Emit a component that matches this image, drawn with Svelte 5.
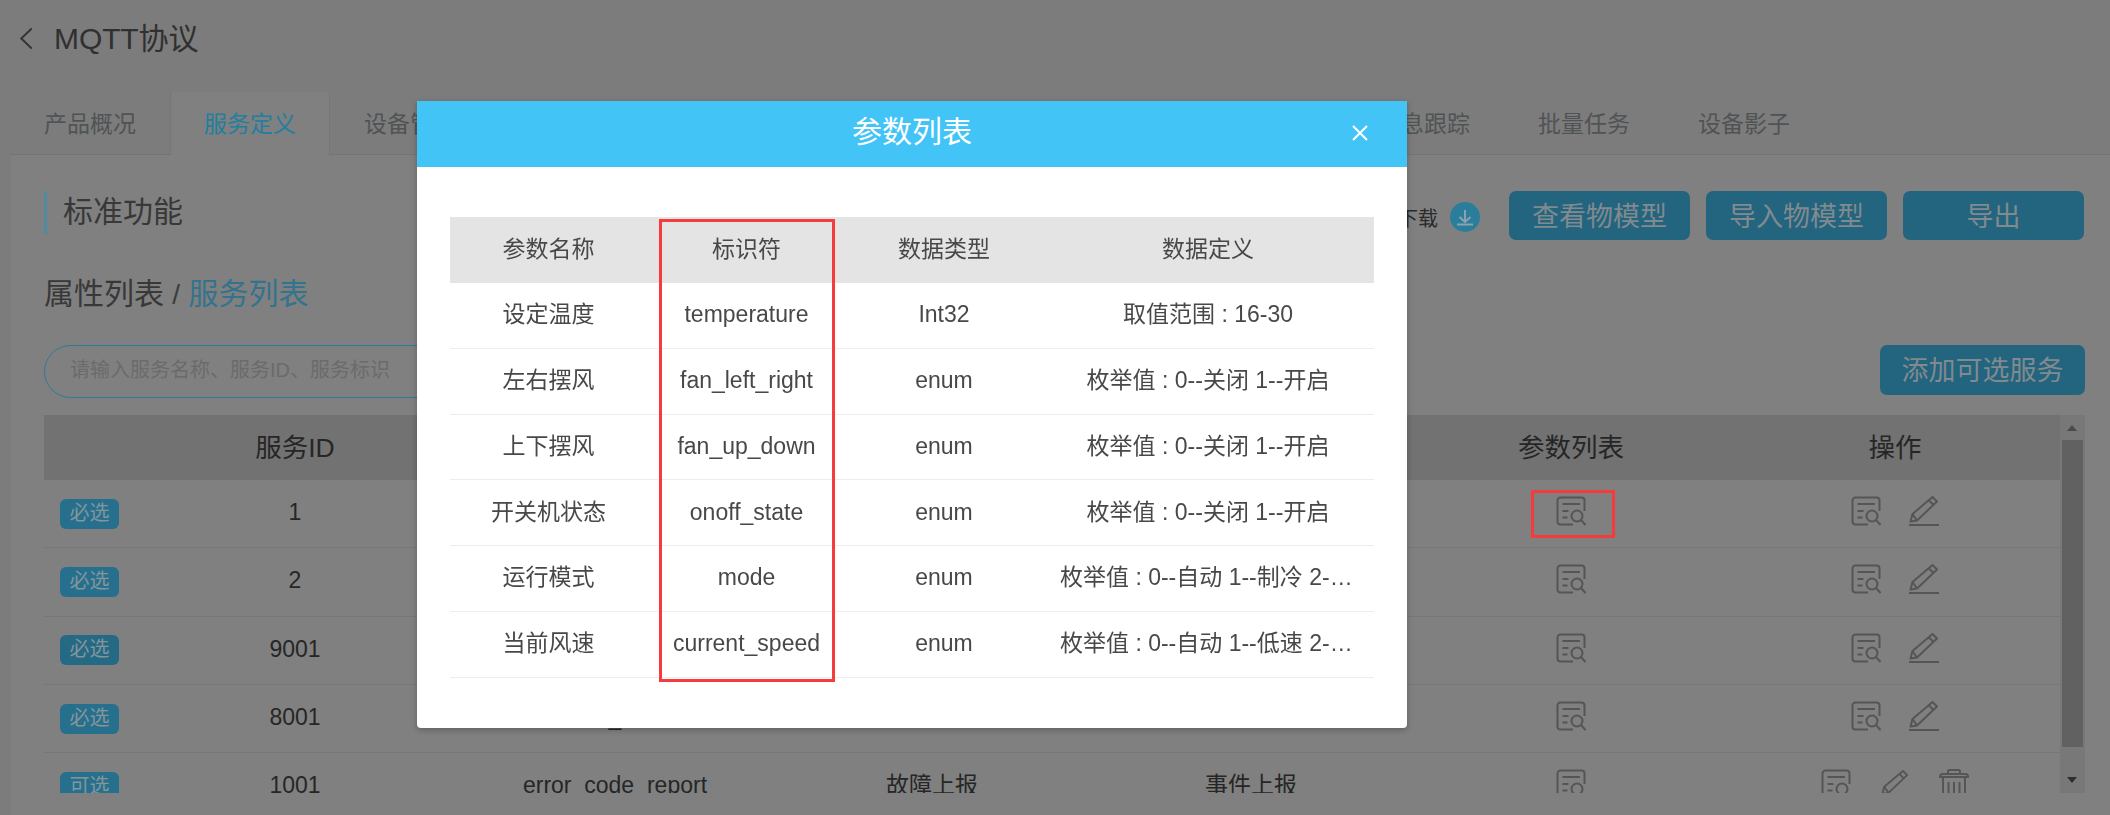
<script>
  const tabs = ['产品概况', '服务定义', '设备管理', '在线调试', '设备日志', '数据转发', '规则引擎', '告警通知', '消息跟踪', '批量任务', '设备影子'];
  const params = [
    ['设定温度', 'temperature', 'Int32', '取值范围 : 16-30'],
    ['左右摆风', 'fan_left_right', 'enum', '枚举值 : 0--关闭 1--开启'],
    ['上下摆风', 'fan_up_down', 'enum', '枚举值 : 0--关闭 1--开启'],
    ['开关机状态', 'onoff_state', 'enum', '枚举值 : 0--关闭 1--开启'],
    ['运行模式', 'mode', 'enum', '枚举值 : 0--自动 1--制冷 2--除湿 3--送风 4--制热'],
    ['当前风速', 'current_speed', 'enum', '枚举值 : 0--自动 1--低速 2--中速 3--高速']
  ];
  const services = [
    { tag: '必选', id: '1', name: 'set_status', kind: '属性设置', type: '属性上报' },
    { tag: '必选', id: '2', name: 'get_status', kind: '属性获取', type: '属性上报' },
    { tag: '必选', id: '9001', name: 'ota_update', kind: '固件升级', type: '服务调用' },
    { tag: '必选', id: '8001', name: 'dev_info', kind: '信息上报', type: '属性上报' },
    { tag: '可选', id: '1001', name: 'error_code_report', kind: '故障上报', type: '事件上报' }
  ];
</script>

{#snippet docIcon()}
  <svg class="icon" viewBox="0 0 30 30" fill="none" stroke="#555" stroke-width="2">
    <path d="M28.5 15V4.5a3 3 0 0 0-3-3H4.5a3 3 0 0 0-3 3v21a3 3 0 0 0 3 3H17" />
    <path d="M6.5 8H24M6.5 15h6M6.5 21.5h5" />
    <circle cx="21" cy="20" r="5.5" />
    <path d="M25 24l4.5 5" />
  </svg>
{/snippet}

{#snippet penIcon(line)}
  <svg class="icon" class:narrow={!line} viewBox="0 0 30 30" fill="none" stroke="#555" stroke-width="2" stroke-linejoin="round">
    <path d="M23.5 1L28 5.5 8 24.5l-6.5 1 2-7.5zM20 4.5l4.5 4.5M3.5 18L8 24.5" />
    {#if line}<path d="M0 29h30" />{/if}
  </svg>
{/snippet}

{#snippet trashIcon()}
  <svg class="icon" viewBox="0 0 30 30" fill="none" stroke="#555" stroke-width="2">
    <path d="M9 4V2.5a1.5 1.5 0 0 1 1.5-1.5h9A1.5 1.5 0 0 1 21 2.5V4" />
    <path d="M1 8V7.5A2.5 2.5 0 0 1 3.500 5h23A2.500 2.500 0 0 1 29 7.500V8z" />
    <path d="M4 8v19a2 2 0 0 0 2 2h18a2 2 0 0 0 2-2V8M9.500 13v12M15 13v12M20.500 13v12" />
  </svg>
{/snippet}

<div class="page">
  <header class="top">
    <svg class="back" viewBox="0 0 14 24" fill="none" stroke="#333" stroke-width="2"><path d="M13 1.500L2 12l11 10.500" /></svg>
    <h1>MQTT协议</h1>
  </header>

  <nav class="tabs">
    {#each tabs as tab, i}
      <div class="tab" class:active={i === 1} class:wide={i === 7}>{tab}</div>
    {/each}
  </nav>

  <main class="panel">
    <div class="bar-row">
      <h2 class="section">标准功能</h2>
      <div class="actions">
        <span class="dl">物模型下载</span>
        <span class="dl-icon">
          <svg viewBox="0 0 30 30" fill="none" stroke="#8aa3ad" stroke-width="2"><path d="M15 8v12M9.500 15l5.500 5 5.500-5M7 22.500h16" /></svg>
        </span>
        <button class="btn">查看物模型</button>
        <button class="btn">导入物模型</button>
        <button class="btn">导出</button>
      </div>
    </div>

    <div class="crumb">属性列表 <i>/</i> <b>服务列表</b></div>

    <div class="search-row">
      <input class="search" placeholder="请输入服务名称、服务ID、服务标识" />
      <button class="btn add">添加可选服务</button>
    </div>

    <div class="grid-wrap">
      <div class="grid">
        <div class="row head">
          <div></div><div>服务ID</div><div>服务标识</div><div>服务名称</div><div>服务类型</div><div>参数列表</div><div>操作</div>
        </div>
        {#each services as s, i}
          <div class="row">
            <div class="tagcell"><span class="badge" class:dark={i === 2}>{s.tag}</span></div>
            <div class="cell">{s.id}</div>
            <div class="cell">{s.name}</div>
            <div class="cell">{s.kind}</div>
            <div class="cell">{s.type}</div>
            <div class="cell iconcell">
              <span class="mark">
                {@render docIcon()}
                {#if i === 0}<span class="redbox small"></span>{/if}
              </span>
            </div>
            <div class="cell iconcell ops" class:three={s.tag === '可选'}>
              {@render docIcon()}
              {@render penIcon(s.tag !== '可选')}
              {#if s.tag === '可选'}{@render trashIcon()}{/if}
            </div>
          </div>
        {/each}
      </div>
      <div class="scroll">
        <div class="arrow up"></div>
        <div class="thumb"></div>
        <div class="arrow down"></div>
      </div>
    </div>
  </main>

  <section class="modal">
    <div class="m-head">
      参数列表
      <svg class="close" viewBox="0 0 16 16" fill="none" stroke="#fff" stroke-width="2"><path d="M1 1l14 14M15 1L1 15" /></svg>
    </div>
    <div class="m-body">
      <div class="m-row m-title">
        <div>参数名称</div><div>标识符</div><div>数据类型</div><div>数据定义</div>
      </div>
      {#each params as p}
        <div class="m-row">
          <div>{p[0]}</div><div>{p[1]}</div><div>{p[2]}</div><div class="ell">{p[3]}</div>
        </div>
      {/each}
    </div>
    <span class="redbox big"></span>
  </section>
</div>

<style>
  :global(body) { margin: 0; background: #7c7c7d; overflow: hidden; }
  * { box-sizing: border-box; }
  .page {
    width: 2110px; height: 815px; overflow: hidden;
    font-family: "Liberation Sans", "Noto Sans CJK SC", sans-serif;
    font-size: 23px; color: #2a2a2a;
  }
  .top { height: 92px; display: flex; align-items: flex-start; padding: 27px 0 0 19px; }
  .back { width: 14px; height: 23px; flex: none; }
  h1 { margin: -6px 0 0 21px; font-size: 30px; line-height: 36px; font-weight: 400; color: #303030; letter-spacing: -0.1px; }

  .tabs { height: 63px; margin-left: 10px; display: flex; border-bottom: 1px solid #747474; }
  .tab { width: 160px; text-align: center; line-height: 65px; color: #505354; flex: none; }
  .tab.wide { width: 214px; }
  .tab.active { background: #808080; color: #217f9f; border: 1px solid #767676; border-width: 0 1px; height: 63px; }

  .panel { margin-left: 11px; height: 660px; background: #808080; padding: 36px 25px 0 33px; }
  .bar-row { display: flex; justify-content: space-between; height: 49px; margin-right: 1px; }
  .section {
    margin: 0; height: 43px; border-left: 3px solid #4f8aa3; padding-left: 16px;
    font-size: 30px; line-height: 41px; font-weight: 400; color: #383838;
  }
  .actions { display: flex; align-items: center; }
  .dl { font-size: 20px; color: #2a2a2a; margin: 3px 12px 0 0; }
  .dl-icon { width: 30px; height: 30px; border-radius: 50%; background: #2a7d9b; margin: 3px 29px 0 0; display: flex; }
  .dl-icon svg { width: 30px; height: 30px; }
  .btn {
    width: 181px; height: 49px; margin-left: 16px; padding: 0 0 3px; border: 0; border-radius: 7px;
    background: #23647f; color: #818a8e; font: inherit; font-size: 27px;
  }
  .dl-icon + .btn { margin-left: 0; }

  .crumb { margin-top: 34px; height: 39px; font-size: 30px; line-height: 40px; color: #383838; }
  .crumb i { font-style: normal; font-size: 28px; color: #3c3c3c; }
  .crumb b { font-weight: 400; color: #33738d; }

  .search-row { margin-top: 32px; height: 53px; display: flex; justify-content: space-between; }
  .search {
    width: 560px; height: 53px; border: 1px solid #2c7a96; border-radius: 27px; background: transparent;
    padding: 0 0 3px 25px; font: inherit; font-size: 20px; outline: none;
  }
  .search::placeholder { color: #6b6b6b; opacity: 1; }
  .btn.add { width: 205px; height: 50px; margin: 0; }

  .grid-wrap { margin-top: 17px; height: 378px; overflow: hidden; display: flex; }
  .grid { width: 2016px; flex: none; }
  .row {
    display: grid; grid-template-columns: 90px 322px 318px 316px 322px 318px 330px;
    height: 68.3px; border-bottom: 1px solid #777;
    align-items: center; text-align: center;
  }
  .row.head { height: 65px; background: #727272; border: 0; font-size: 26.5px; color: #262626; padding-bottom: 4px; }
  .cell { display: flex; align-items: center; justify-content: center; padding-bottom: 3px; color: #262626; line-height: 30px; }
  .iconcell { padding-bottom: 5px; }
  .tagcell { text-align: left; padding-left: 16px; display: flex; }
  .badge {
    width: 59px; height: 30px; border-radius: 6px; background: #27708d; color: #84959c;
    font-size: 20px; line-height: 29px; text-align: center;
  }
  .badge.dark { background: #246a85; }
  .icon { width: 30px; height: 30px; flex: none; display: block; }
  .icon.narrow { width: 28px; }
  .ops { gap: 28px; }
  .ops.three { gap: 30px; }
  .mark { position: relative; display: block; width: 30px; height: 30px; }

  .redbox { position: absolute; border: 3px solid #f53b3b; pointer-events: none; }
  .redbox.small { inset: -6px -29px -12px -25px; }
  .redbox.big { left: 242px; top: 118px; width: 176px; height: 463px; }

  .scroll { width: 25px; flex: none; background: #787878; padding: 0 2px; display: flex; flex-direction: column; }
  .thumb { height: 307px; background: #616161; flex: none; }
  .arrow { height: 25px; flex: none; position: relative; }
  .arrow::after {
    content: ""; position: absolute; left: 5px; width: 0; height: 0;
    border-left: 5.5px solid transparent; border-right: 5.500px solid transparent;
  }
  .arrow.up::after { top: 10px; border-bottom: 6px solid #4a4a4a; }
  .arrow.down { height: 46px; }
  .arrow.down::after { top: 30px; border-top: 6px solid #2f2f2f; }

  .modal {
    position: fixed; left: 417px; top: 101px; width: 990px; height: 627px;
    background: #fff; border-radius: 0 0 4px 4px; box-shadow: 0 2px 6px rgba(0, 0, 0, .25);
    color: #484848;
  }
  .m-head {
    position: relative; height: 66px; background: #42c4f7; color: #fff; text-align: center;
    font-size: 30px; line-height: 62px;
  }
  .close { position: absolute; left: 935px; top: 24px; width: 16px; height: 16px; }
  .m-body { padding: 50px 33px 0; }
  .m-row {
    display: grid; grid-template-columns: 197px 199px 196px 332px;
    height: 65.75px; border-bottom: 1px solid #ececf1; align-items: center; text-align: center;
    line-height: 28px; padding-bottom: 2px;
  }
  .m-row.m-title { height: 66px; background: #e4e4e4; border: 0; padding-bottom: 3px; }
  .ell { padding: 0 18px; white-space: nowrap; overflow: hidden; text-overflow: ellipsis; }
</style>
